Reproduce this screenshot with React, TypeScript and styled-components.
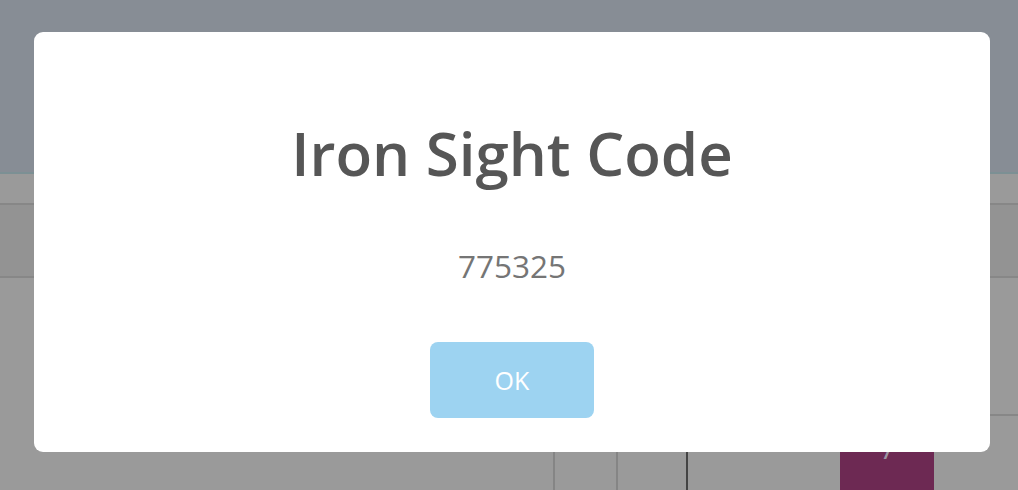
import React from "react";
import styled, { createGlobalStyle } from "styled-components";

const Global = createGlobalStyle`
  html, body { margin: 0; padding: 0; }
  body {
    width: 1018px;
    height: 490px;
    overflow: hidden;
    background: #9a9a9a;
    font-family: "Open Sans", "Liberation Sans", sans-serif;
  }
`;

const Page = styled.div`
  width: 1018px;
  height: 490px;
  display: flex;
  flex-direction: column;
  background: #9a9a9a;
  overflow: hidden;
`;

const Header = styled.div`
  height: 172px;
  flex: none;
  background: #878d95;
  border-bottom: 2px solid #7c9094;
`;

const Row = styled.div<{ $h: number; $bg?: string }>`
  height: ${(p) => p.$h}px;
  flex: none;
  background: ${(p) => p.$bg ?? "#9a9a9a"};
  border-bottom: 2px solid #878787;
  box-sizing: border-box;
`;

const Panel = styled.div`
  height: 138px;
  flex: none;
  display: flex;
`;

const PanelLeft = styled.div`
  flex: 1;
`;

const PanelRight = styled.div`
  width: 28px;
  border-bottom: 2px solid #878787;
  box-sizing: border-box;
`;

const Cells = styled.div`
  flex: 1;
  display: flex;
  padding-left: 553px;
`;

const Cell = styled.div<{ $w: number; $line?: string }>`
  width: ${(p) => p.$w}px;
  flex: none;
  border-left: 2px solid ${(p) => p.$line ?? "#858585"};
  box-sizing: border-box;
`;

const ActiveCell = styled.div`
  width: 94px;
  flex: none;
  margin-left: 152px;
  background: #6d2953;
  color: #9c94a2;
  font-size: 21px;
  font-weight: 600;
  text-align: center;
  padding-top: 25px;
  box-sizing: border-box;
  line-height: 1;
`;

const Overlay = styled.div`
  position: fixed;
  inset: 0;
  display: flex;
  justify-content: flex-start;
  padding: 32px 0 0 34px;
  box-sizing: border-box;
`;

const Modal = styled.div`
  width: 956px;
  height: 420px;
  background: #ffffff;
  border-radius: 9px;
  display: flex;
  flex-direction: column;
  align-items: center;
  box-sizing: border-box;
  padding-top: 80px;
`;

const Title = styled.h2`
  margin: 0;
  font-family: "Open Sans", sans-serif;
  font-weight: 600;
  font-size: 60px;
  line-height: 82px;
  color: #565656;
`;

const Code = styled.div`
  margin-top: 52px;
  font-size: 31.5px;
  line-height: 40px;
  color: #757575;
`;

const OkButton = styled.button`
  margin-top: 56px;
  width: 164px;
  height: 76px;
  border: none;
  border-radius: 8px;
  background: #9dd3f1;
  color: #ffffff;
  font-family: "Open Sans", sans-serif;
  font-size: 25px;
  cursor: pointer;
`;

export default function App() {
  return (
    <>
      <Global />
      <Page>
        <Header />
        <Row $h={31} />
        <Row $h={73} $bg="#939393" />
        <Panel>
          <PanelLeft />
          <PanelRight />
        </Panel>
        <Cells>
          <Cell $w={63} />
          <Cell $w={70} />
          <Cell $w={0} $line="#444444" />
          <ActiveCell>7</ActiveCell>
        </Cells>
      </Page>
      <Overlay>
        <Modal>
          <Title>Iron Sight Code</Title>
          <Code>775325</Code>
          <OkButton>OK</OkButton>
        </Modal>
      </Overlay>
    </>
  );
}
